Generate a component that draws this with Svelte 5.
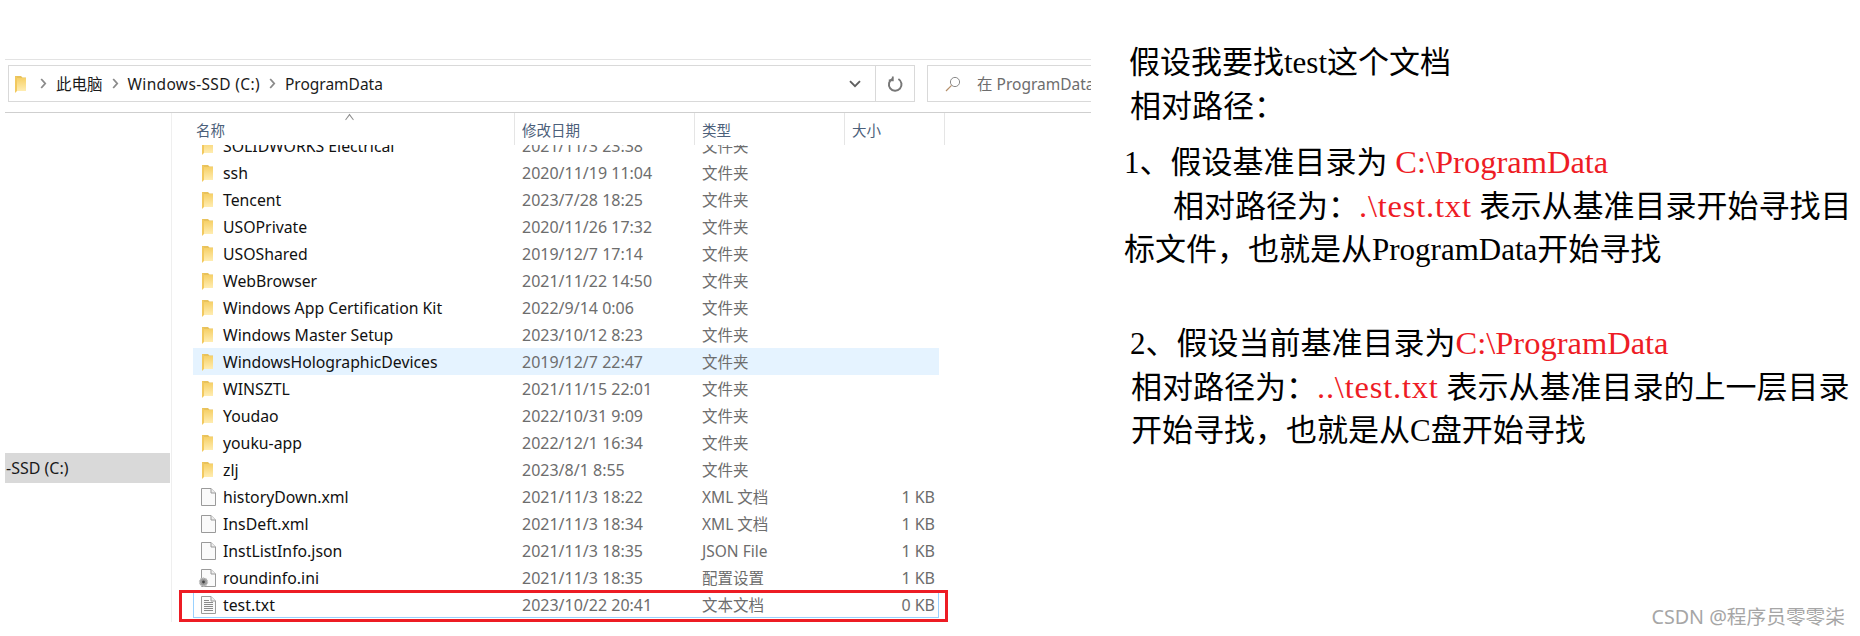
<script lang="ts">
	interface Row {
		name: string;
		date: string;
		type: string;
		size?: string;
		icon: 'folder' | 'file' | 'ini' | 'txt';
		hover?: boolean;
		selected?: boolean;
	}

	const folder = (name: string, date: string, hover = false): Row => ({
		name,
		date,
		type: '文件夹',
		icon: 'folder',
		hover
	});

	const rows: Row[] = [
		folder('SOLIDWORKS Electrical', '2021/11/3 23:38'),
		folder('ssh', '2020/11/19 11:04'),
		folder('Tencent', '2023/7/28 18:25'),
		folder('USOPrivate', '2020/11/26 17:32'),
		folder('USOShared', '2019/12/7 17:14'),
		folder('WebBrowser', '2021/11/22 14:50'),
		folder('Windows App Certification Kit', '2022/9/14 0:06'),
		folder('Windows Master Setup', '2023/10/12 8:23'),
		folder('WindowsHolographicDevices', '2019/12/7 22:47', true),
		folder('WINSZTL', '2021/11/15 22:01'),
		folder('Youdao', '2022/10/31 9:09'),
		folder('youku-app', '2022/12/1 16:34'),
		folder('zlj', '2023/8/1 8:55'),
		{ name: 'historyDown.xml', date: '2021/11/3 18:22', type: 'XML 文档', size: '1 KB', icon: 'file' },
		{ name: 'InsDeft.xml', date: '2021/11/3 18:34', type: 'XML 文档', size: '1 KB', icon: 'file' },
		{ name: 'InstListInfo.json', date: '2021/11/3 18:35', type: 'JSON File', size: '1 KB', icon: 'file' },
		{ name: 'roundinfo.ini', date: '2021/11/3 18:35', type: '配置设置', size: '1 KB', icon: 'ini' },
		{ name: 'test.txt', date: '2023/10/22 20:41', type: '文本文档', size: '0 KB', icon: 'txt', selected: true }
	];
</script>

{#snippet folderIcon()}
	<svg class="folder" viewBox="0 0 13 18" width="13" height="18">
		<defs>
			<linearGradient id="fold" x1="0" y1="0" x2="0" y2="1">
				<stop offset="0" stop-color="#f6d067"></stop>
				<stop offset="1" stop-color="#ffedb2"></stop>
			</linearGradient>
		</defs>
		<path d="M1 1h6l1.5 1.5H12V16H1z" fill="#e8c25c"></path>
		<path d="M3 3h9v13H3z" fill="url(#fold)"></path>
		<path d="M1 1l2 1v14l-2 2z" fill="#f2c95f"></path>
	</svg>
{/snippet}

{#snippet chev()}
	<svg class="chev" viewBox="0 0 7 11" width="7" height="11">
		<path d="M1.2 1l4 4.5-4 4.5" fill="none" stroke="#8a8a8a" stroke-width="1.8"></path>
	</svg>
{/snippet}

<main class="page">
	<section class="explorer">
		<div class="toolbar">
			<div class="address">
				<div class="crumbs">
					{@render folderIcon()}
					{@render chev()}
					<span>此电脑</span>
					{@render chev()}
					<span class="drive">Windows-SSD (C:)</span>
					{@render chev()}
					<span>ProgramData</span>
				</div>
				<div class="drop">
					<svg viewBox="0 0 12 8" width="12" height="8"><path d="M1 1.2l5 5 5-5" fill="none" stroke="#5f5f5f" stroke-width="1.9"></path></svg>
				</div>
				<div class="refresh">
					<svg viewBox="0 0 16 16" width="16" height="16">
						<path d="M5.4 2.8A6.3 6.3 0 1 0 11.4 3" fill="none" stroke="#777" stroke-width="2"></path>
						<path d="M5.8 0.4v4H1.8" fill="none" stroke="#777" stroke-width="1.8"></path>
					</svg>
				</div>
			</div>
			<div class="search">
				<svg viewBox="0 0 16 16" width="16" height="16">
					<circle cx="10" cy="6" r="4.6" fill="none" stroke="#8a8a8a" stroke-width="1"></circle>
					<path d="M6.6 9.4L1 15" fill="none" stroke="#b58f6a" stroke-width="1.2"></path>
				</svg>
				<span>在 ProgramData 中搜索</span>
			</div>
		</div>

		<div class="body">
			<aside class="nav">
				<div class="nav-item">-SSD (C:)</div>
			</aside>
			<div class="files">
				<div class="head">
					<div class="col name">名称<span class="caret"></span></div>
					<div class="col date">修改日期</div>
					<div class="col type">类型</div>
					<div class="col size">大小</div>
				</div>
				<div class="list">
					<div class="rows">
						{#each rows as row}
							<div class="row" class:hover={row.hover} class:selected={row.selected}>
								<div class="cell name">
									<span class="icon">
										{#if row.icon === 'folder'}
											{@render folderIcon()}
										{:else}
											<svg viewBox="0 0 15 18" width="15" height="18">
												<path d="M.5 .5h9.5l4.5 4.5v12.5H.5z" fill="#fafafa" stroke="#9a9a9a"></path>
												<path d="M10 .5v4.5h4.5" fill="#eee" stroke="#9a9a9a"></path>
												{#if row.icon === 'txt'}
													<path d="M3 4.5h5M3 6.5h9M3 8.5h9M3 10.5h9M3 12.5h9M3 14.5h9" stroke="#8a8a8a"></path>
												{/if}
												{#if row.icon === 'ini'}
													<circle cx="2.5" cy="13" r="4" fill="#9b9b9b" stroke="#c4c4c4" stroke-width="1.4" stroke-dasharray="1.5 1"></circle>
													<circle cx="2.5" cy="13" r="1.4" fill="#444"></circle>
												{/if}
											</svg>
										{/if}
									</span>
									<span class="label">{row.name}</span>
								</div>
								<div class="cell date">{row.date}</div>
								<div class="cell type">{row.type}</div>
								<div class="cell size">{row.size ?? ''}</div>
							</div>
						{/each}
					</div>
				</div>
			</div>
		</div>
	</section>

	<section class="notes">
		<p class="l1">假设我要找test这个文档</p>
		<p class="l2">相对路径：</p>
		<p class="l3">1、假设基准目录为 <em>C:\ProgramData</em></p>
		<p class="l4">相对路径为：<em class="path">.\test.txt</em> 表示从基准目录开始寻找目</p>
		<p class="l5">标文件，也就是从ProgramData开始寻找</p>
		<p class="l6">2、假设当前基准目录为<em>C:\ProgramData</em></p>
		<p class="l7">相对路径为：<em class="path">..\test.txt</em> 表示从基准目录的上一层目录</p>
		<p class="l7">开始寻找，也就是从C盘开始寻找</p>
	</section>

	<div class="mark">CSDN @程序员零零柒</div>
</main>

<style>
	:global(body) {
		margin: 0;
		background: #fff;
	}

	.page {
		position: relative;
		width: 1860px;
		height: 636px;
		overflow: hidden;
		display: flex;
		background: #fff;
		font-family: "Noto Sans", "Noto Sans CJK SC", sans-serif;
	}

	.explorer {
		width: 1086px;
		margin: 59px 0 0 5px;
		flex: none;
		overflow: hidden;
		border-top: 1px solid #e3e3e3;
		box-sizing: border-box;
		height: 563px;
	}

	.toolbar {
		display: flex;
		gap: 12px;
		height: 53px;
		box-sizing: border-box;
		padding: 5px 0 10px 3px;
		border-bottom: 1px solid #cfcfcf;
		font-size: 15.5px;
		color: #1a1a1a;
	}

	.address {
		width: 907px;
		flex: none;
		display: flex;
		border: 1px solid #d9d9d9;
		box-sizing: border-box;
	}

	.crumbs {
		flex: 1;
		display: flex;
		align-items: center;
		padding-left: 5px;
		gap: 9px;
	}

	.drive {
		letter-spacing: 0.35px;
	}

	.chev {
		flex: none;
	}

	.crumbs .folder {
		margin-right: 4px;
	}

	.drop {
		width: 40px;
		display: flex;
		align-items: center;
		justify-content: center;
		border-right: 1px solid #d9d9d9;
	}

	.refresh {
		width: 38px;
		display: flex;
		align-items: center;
		justify-content: center;
	}

	.search {
		flex: 1;
		display: flex;
		align-items: center;
		gap: 16px;
		padding-left: 17px;
		border: 1px solid #d9d9d9;
		border-right: 0;
		color: #6d6d6d;
		white-space: nowrap;
		overflow: hidden;
		min-width: 0;
	}

	.search svg {
		flex: none;
	}

	.body {
		display: flex;
		height: 509px;
	}

	.nav {
		width: 167px;
		flex: none;
		padding-top: 340px;
		box-sizing: border-box;
		border-right: 1px solid #efefef;
	}

	.nav-item {
		width: 165px;
		height: 30px;
		line-height: 30px;
		padding-left: 1px;
		box-sizing: border-box;
		background: #d9d9d9;
		font-size: 16px;
		color: #1a1a1a;
	}

	.files {
		width: 773px;
		flex: none;
		padding-left: 21px;
		box-sizing: border-box;
	}

	.head {
		display: flex;
		height: 32px;
		font-size: 14.5px;
		color: #4c607a;
	}

	.col {
		box-sizing: border-box;
		border-right: 1px solid #e5e5e5;
		padding: 6px 0 0 7px;
	}

	.col.name {
		width: 322px;
	}

	.col.date {
		width: 180px;
	}

	.col.type {
		width: 150px;
	}

	.col.size {
		width: 100px;
	}

	.cell.name {
		width: 322px;
		font-size: 15.8px;
	}

	.cell.date {
		width: 180px;
	}

	.cell.type {
		width: 150px;
	}

	.cell.size {
		width: 94px;
	}

	.col.name {
		position: relative;
		padding-left: 3px;
	}

	.caret {
		position: absolute;
		left: 153px;
		top: 3px;
		width: 6px;
		height: 6px;
		border-left: 1px solid #8a8a8a;
		border-top: 1px solid #8a8a8a;
		transform: rotate(45deg) skew(8deg, 8deg);
	}

	.list {
		display: flow-root;
		width: 746px;
		height: 477px;
		clip-path: inset(0 -20px -20px -20px);
	}

	.rows {
		margin-top: -13px;
	}

	.row {
		position: relative;
		display: flex;
		height: 27px;
		align-items: center;
		box-sizing: border-box;
		font-size: 16px;
		color: #6d6d6d;
		white-space: nowrap;
	}

	.row.hover {
		background: #e5f3ff;
	}

	.row.selected {
		box-shadow: inset 0 0 0 1px #99d1ff;
	}

	.row.selected::after {
		content: "";
		position: absolute;
		left: -14px;
		right: -9px;
		top: -1px;
		bottom: -4px;
		border: 3px solid #ed1c24;
	}

	.cell {
		box-sizing: border-box;
		padding-left: 7px;
	}

	.cell.name {
		display: flex;
		align-items: center;
		color: #111;
		padding-left: 8px;
	}

	.cell.type {
		font-size: 15.5px;
	}

	.cell.size {
		text-align: right;
		padding-right: 4px;
	}

	.icon {
		width: 22px;
		display: flex;
		flex: none;
	}

	.icon svg {
		overflow: visible;
	}

	.notes {
		flex: 1;
		padding: 41px 0 0 33px;
		font-family: "Liberation Serif", "Noto Sans CJK SC", serif;
		font-size: 31px;
		color: #000;
		min-width: 0;
	}

	.notes p {
		margin: 0;
		height: 44px;
		line-height: 44px;
		white-space: nowrap;
	}

	.notes em {
		font-style: normal;
		font-size: 32.5px;
		color: #ee1c25;
	}

	.notes em.path {
		letter-spacing: 0.8px;
	}

	.notes .l1 {
		padding-left: 5px;
	}

	.notes .l2 {
		padding-left: 6px;
		margin-bottom: 11px;
	}

	.notes .l4 {
		padding-left: 49px;
	}

	.notes .l5 {
		margin-bottom: 49px;
	}

	.notes .l6 {
		padding-left: 6px;
	}

	.notes .l7 {
		padding-left: 7px;
	}

	.mark {
		position: absolute;
		right: 15px;
		bottom: 6px;
		font-size: 19.7px;
		color: #a6a6a6;
	}
</style>
